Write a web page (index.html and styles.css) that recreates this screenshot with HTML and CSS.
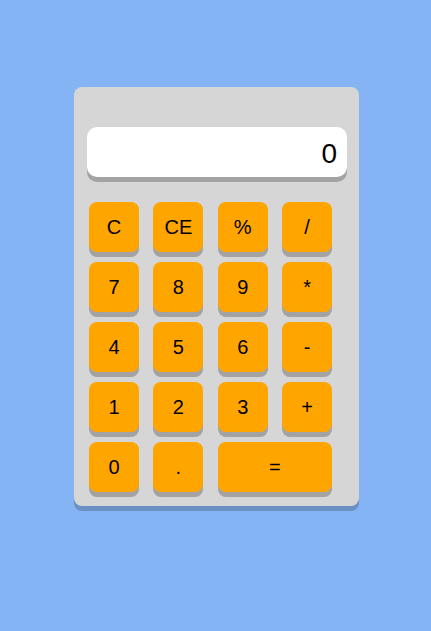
FILE: index.html
```html
<!DOCTYPE html>
<html lang="en">
<head>
<meta charset="utf-8">
<title>Calculator</title>
<link rel="stylesheet" href="styles.css">
</head>
<body>
<div class="calculator">
  <div class="display">0</div>
  <div class="keys">
    <button class="key">C</button>
    <button class="key">CE</button>
    <button class="key">%</button>
    <button class="key">/</button>
    <button class="key">7</button>
    <button class="key">8</button>
    <button class="key">9</button>
    <button class="key">*</button>
    <button class="key">4</button>
    <button class="key">5</button>
    <button class="key">6</button>
    <button class="key">-</button>
    <button class="key">1</button>
    <button class="key">2</button>
    <button class="key">3</button>
    <button class="key">+</button>
    <button class="key">0</button>
    <button class="key">.</button>
    <button class="key key-wide">=</button>
  </div>
</div>
</body>
</html>
```
FILE: styles.css
```css
html, body {
  margin: 0;
  padding: 0;
}
body {
  background: #85b4f5;
  font-family: "Liberation Sans", Arial, sans-serif;
  width: 431px;
  height: 631px;
  overflow: hidden;
}
.calculator {
  box-sizing: border-box;
  width: 285px;
  height: 419px;
  margin: 87px 0 0 74px;
  padding: 40px 12px 0 13px;
  background: #d6d6d6;
  border-radius: 8px;
  box-shadow: 0 5px 0 #6a90c4;
}
.display {
  box-sizing: border-box;
  width: 260px;
  height: 50px;
  background: #ffffff;
  border-radius: 10px;
  box-shadow: 0 5px 0 #a3a3a3;
  padding: 0 10px;
  font-size: 28px;
  line-height: 54px;
  text-align: right;
  color: #000;
}
.keys {
  display: grid;
  grid-template-columns: repeat(4, 50px);
  grid-auto-rows: 50px;
  column-gap: 14.35px;
  row-gap: 10px;
  margin: 25px 0 0 2px;
}
.key {
  border: none;
  margin: 0;
  padding: 0;
  background: #ffa500;
  border-radius: 8px;
  box-shadow: 0 5px 0 #a3a3a3;
  font-family: "Liberation Sans", Arial, sans-serif;
  font-size: 20px;
  color: #000;
  cursor: pointer;
}
.key-wide {
  grid-column: span 2;
}
```
